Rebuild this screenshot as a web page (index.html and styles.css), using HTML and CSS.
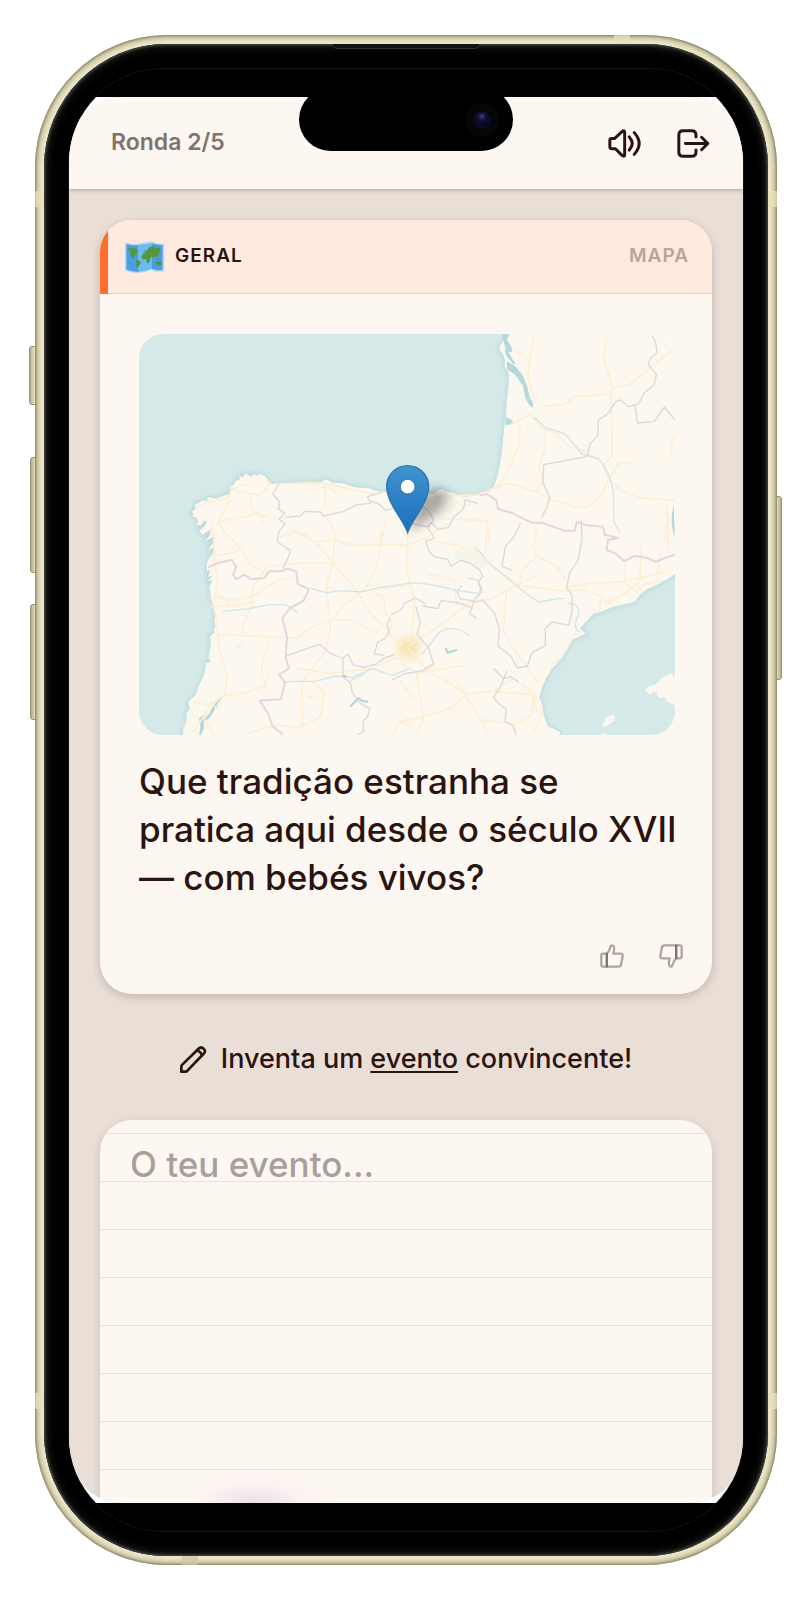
FILE: index.html
```html
<!DOCTYPE html>
<html lang="pt">
<head>
  <meta charset="UTF-8" />
  <meta name="viewport" content="width=device-width, initial-scale=1" />
  <title>Ronda 2/5</title>
  <link rel="stylesheet" href="styles.css">
</head>
<body>

  <div class="phone">
    <span class="side-btn side-btn-action"></span>
    <span class="side-btn side-btn-up"></span>
    <span class="side-btn side-btn-down"></span>
    <span class="side-btn side-btn-power"></span>
    <span class="antenna antenna-tr"></span>
    <span class="antenna antenna-bl"></span>
    <span class="antenna antenna-side antenna-lt"></span>
    <span class="antenna antenna-side antenna-rt"></span>
    <span class="antenna antenna-side antenna-lb"></span>
    <span class="antenna antenna-side antenna-rb"></span>

    <div class="bezel">
      <span class="earpiece"></span>
      <span class="island"><span class="camera"></span></span>

      <div class="screen">
        <div class="app">

          <!-- Top bar -->
          <header class="topbar">
            <span class="round">Ronda 2/5</span>
            <div class="topbar-actions">
              <button class="icon-btn" type="button" aria-label="Som">
                <svg class="icon-top" viewBox="0 0 99 88">
                  <path d="M11 29h8L42 8q8-6 8 3v66q0 9-8 3L22 60H11q-6 0-6-6V35q0-6 6-6z" />
                  <path d="M64 24q18 20 0 40M79 11q30 33 0 66" />
                </svg>
              </button>
              <button class="icon-btn" type="button" aria-label="Sair">
                <svg class="icon-top" viewBox="0 0 99 88">
                  <path d="M57 24v-6q0-13-13-13H18Q5 5 5 18v52q0 13 13 13h26q13 0 13-13v-6" />
                  <path d="M25 44h68M74 25l19 19-19 19" />
                </svg>
              </button>
            </div>
          </header>

          <main class="content">

            <!-- Question card -->
            <section class="card">
              <div class="card-head">
                <svg class="emoji" viewBox="0 0 123 99" aria-hidden="true">
                  <path class="emoji-edge" d="M3 3q20 8 39 4L82 1q20 9 39 6v85q-20 5-40-4-20 8-39 9-20-2-40-8z" />
                  <path class="emoji-sea" d="M7 8q18 6 35 4v81q-18-1-35-7zM82 6q18 7 34 6v75q-16 3-34-4z" />
                  <path class="emoji-sea-light" d="M42 12l40-6v77q-20 9-40 10z" />
                  <path class="emoji-land" d="M12 24q10-6 22-2l8 7-5 6 4 6-9 2-4 10-7-7-3-12zM36 57l10 1 6 8-8 8-2 9-5-9zM53 47l5-10 7-3 8-13 10-5 15 4 11 1v10l-6 8 2 8-8-2-9 6-6-5-4 12-3 8-6 1-3-13-10 2zM58 35l4-8 4 3zM94 63l13-3 6 8-5 7-13-6zM99 51l7 3-6 4z" />
                </svg>
                <span class="category">GERAL</span>
                <span class="kind">MAPA</span>
              </div>

              <div class="card-body">
                <!-- Map: units are thirds of a pixel -->
                <svg class="map" viewBox="0 0 1608 1203" role="img" aria-label="Mapa do norte de Espanha">
                  <defs>
                    <linearGradient id="pinFill" x1="0" y1="0" x2="0" y2="1">
                      <stop offset="0" stop-color="#3f93ce" />
                      <stop offset="1" stop-color="#1c6fbd" />
                    </linearGradient>
                    <filter id="soft" x="-50%" y="-50%" width="200%" height="200%">
                      <feGaussianBlur stdDeviation="16" />
                    </filter>
                    <filter id="coast" x="-5%" y="-5%" width="110%" height="110%">
                      <feGaussianBlur stdDeviation="6" />
                    </filter>
                    <radialGradient id="city">
                      <stop offset="0" stop-color="#fbe0a4" />
                      <stop offset="1" stop-color="#fbe0a4" stop-opacity="0" />
                    </radialGradient>
                    <clipPath id="seaClip">
                      <use href="#atlantic" />
                      <use href="#med" />
                    </clipPath>
                  </defs>

                  <rect class="land" width="1608" height="1203" />
                  <g class="sea">
                    <path id="atlantic" d="M-20-20H1108V0L1096 18 1086 30 1080 44 1092 62 1098 78 1096 96 1106 112 1111 123 1107 170 1103 208 1100 250 1095 288 1088 358 1078 418 1063 463 1048 474 1034 473 1023 483 1000 486 973 488 950 480 933 473 922 476 913 466 896 468 888 478 868 480 843 473 800 474 743 473 712 471 690 463 663 461 640 458 613 448 580 446 566 438 558 436 550 444 533 445 500 447 470 446 423 448 395 450 388 440 383 432 374 424 363 420 352 425 344 418 338 428 328 423 318 418 312 430 300 424 303 436 290 440 284 452 271 456 276 466 271 474 278 482 262 482 248 488 232 494 208 488 204 500 188 500 178 508 166 512 170 524 158 533 164 542 158 546 174 552 178 563 172 572 186 574 194 562 205 560 196 578 180 590 190 602 206 592 222 584 212 604 196 624 220 610 224 624 206 648 226 640 228 652 208 676 203 690 204 712 214 708 206 730 222 724 204 742 220 738 211 758 218 803 224 826 231 838 226 860 230 880 222 884 228 893 213 908 216 928 213 948 208 970 216 984 201 988 196 1020 178 1058 170 1082 148 1103 152 1124 142 1140 144 1170 133 1180 131 1223H-20z" />
                    <path id="med" d="M1628 708L1590 732 1553 753 1524 766 1508 778 1496 792 1488 803 1460 810 1423 818 1390 832 1363 840 1344 860 1323 883 1332 892 1342 900 1320 908 1298 918 1284 948 1263 978 1240 1004 1223 1028 1210 1060 1201 1088 1210 1112 1213 1138 1220 1160 1228 1178 1246 1184 1263 1195 1258 1223H1628z" />
                    <path d="M1088 0h24l-8 18 12 18 4 16-14 6-8-20zM1104 82l24 14 22 26 14 34 8 34 10 16v16l-12-10-12-22-6-34-22-32-26-18zM1096 44l14 14 20 32-6 2-22-26zM1100 250l20 8 2 10-22 6zM1604 514q-14 50 4 100z" class="estuary" />
                  </g>
                  <g class="coast" clip-path="url(#seaClip)" filter="url(#coast)">
                    <use href="#atlantic" />
                    <use href="#med" />
                  </g>
                  <g class="land">
                    <path d="M1518 1068l14-12 16-4 18-18 32-16 5 10 5-4v90l-22-10-10-14-16 2-8-18-12 2-6 8z" />
                    <path d="M1386 1173l10-6 4-16 22-10 6 6-2 12-20 16-12 4zM1387 1195l18 8h-14zM133 1203l4-30 15-36 12-30 18-14 16 4 14 12-8 22-12 30 4 42z" />
                  </g>
                  <path class="estuary" d="M180 1203l4-24-4-26 12-10 14 4 18-34 26-26-20 34-18 30-18 14 2 16-10 22z" />

                  <g class="park">
                    <path d="M945 645l50-8 40 20 8 40-26 10-30-22-36-8z" />
                    <path d="M880 488l30-20 30 10 16 34-20 32-40 0z" />
                    <path d="M815 900l26 30-6 50-28-14z" />
                  </g>
                  <circle cx="808" cy="942" r="52" fill="url(#city)" />

                  <!-- Roads -->
                  <g class="road">
                    <g transform="translate(-27 -42)">
                      <path d="M200 560l30-12 60-12 20-30 46-16M300 500l24 14 60 10 24-16 14-22M300 540l-36 66 16 20 14 34M264 606l56-12 70-14 30 14 18 2M360 530l6 40 34 24M250 610l-8 30 18 22M450 492l90-4 44 2 60 14 90 20M584 490l2 70M540 490l40 12 20 0 22 20M590 590l22 40 8 30M770 590l-14 70M450 650l46-14 30 6 20 18M396 600l4 10" />
                    </g>
                    <g transform="translate(783 -42)">
                      <path d="M402 48l-14 70-4 60 22 70M340 90l34 20 12 20M434 258l60-4 30-24 110-8 4-16-26-90 10-78M636 204l52-10 130-104M634 210l2 200-22 22 12 50 32-54 40 0M390 284l40 42 40 14 30 36 70 24 40 30 16 50 36 30 60 24 130 8M388 284l-56 30M360 316l-4 60-26 66-40 70M436 330l-2 60-18 50 14 40-22 36M290 496l46-4 50 16 80 34 60 20 40-2 40-36 18-44M290 500l-60 24-130 6M150 530l40 30 24-8M120 596l140 6 8 58M820 350l-10 60 16-4M800 550l4 60-10 50" />
                    </g>
                    <g transform="translate(-27 588)">
                      <path d="M278 0l50 50 30 50 40 24M250 80l70-14 10-20M250 0l4 100 10 60-14 60 10 50 8 90 22 70-4 60-24 48-20-24-20 60M250 200l60 12 60-14 70-46 60-12M240 230l80-2 56-12M410 110l-40 60-6 60-24 50-6 40M260 314l240 10 50-36 60-18 50 0 80 40 8-10M250 200l30 0 20 30M410 110l80-10 120 0-20 60 10 140-14 62-70 96 2 110-4 40M490 0l60 36 60-6 60 16 170-2M560 40l50 60 70 80 40 70 60 56M614 20l-4 80M754 0v50l-14 60-30 60-70 60-36 40M706 164l60 10 70-6M730 190l30 6 6 50 20 30-8 40M780 316l40 30M500 416l100 14 120-14 70-30 50 0M270 500l70-10 60-20 20-40M190 514l50 14 30-26M240 528l-50 80M420 326l-22 70-4 40 16 34M320 354l20-12M355 612l40-16 50-10 60 6 60-26 10-20 8-60-44-36M532 500l40 4M790 612l14-30 36-20M220 560l30 54M180 550l30 14" />
                    </g>
                    <g transform="translate(783 588)">
                      <path d="M0 50l24-6 60-24 60-40M24 0l-4 120 24 90-4 60-10 80M24 350l30-20 90-60 70-56 60-6 80-44 50-26M170 230l-8-80-80-18M110 36l70 10 60 40 120 80 130 18 60-4 50 16 20 26 66-40 24-18 18-24M260 0l-4 70M358 160l10-40 42-42-10-30 10-48M410 78l60 30 26 40M500 170l70-10 90-4 30-6 110-24M676 80v80l34 26 20-20 50-16M724 40l-4 100M780 70l-8 60M806 0l-4 70M600 246v-40M640 226l-20-20M320 170l-10 130 26 50 80 110M530 300l-20 40-26 44-26 20-14 30M20 350l60 70 20-20M0 400l50 28 150-22M50 428l20 140-20 44M84 428l50 20 60 44 40 60 30 60M0 450l44 60M0 576l60-14 100-30 40-40 80-8 120 10 14 60M280 484l60-40M404 494l-40-34M404 494l-10 60-50 30-110-16M408 500l20 50-30 60M0 570l30 20M196 490l-26-30" />
                    </g>
                  </g>

                  <!-- Rivers -->
                  <g class="river">
                    <path d="M515 762l30 10 20 4 40-6 60 4 60-14 60-8 43-6 60 8 60 14 70 10 10-16-12-24-30-6M250 832l80-8 60-12h50l40 26M430 1044l40-2 60 0 60-16 50 4 60-26 60 20 50-20M635 1040l40-20M1008 638l50 56 110 90 30 20 60-10 18 0M1288 810q34-6 30 34-20 40 6 50M850 960l50-64q46-30 90 10M1185 250l34 30 60 20 50 60 50 14 32 50 12 50 2 90 18 34" />
                    <path class="river-lake" d="M608 1026h14M920 942l6 14 28-8M634 1118l24-26 10 8 20 4" />
                  </g>

                  <!-- Region and country borders -->
                  <g class="region">
                    <path d="M420 450l-18 30 20 24-4 20 20 14-18 18 18 12-18 24-6 30 22 16 18 12-6 20-14 26 4 16M438 550l46-4 14-14 46 2 10 12 60-14 40-20 40-4-8-20 44-14M690 500l30 10 20 20 28-10" />
                    <path d="M840 508l30 24 14 26-20 20-40-8M1018 508l-40-10-4 26-30 26-16 30-30 6-20-18-12 14 20 30-26 10 10 30 16 16 40 8 10 20 30-18 28 10 30 22 6 18-12 16 10 30-20 20-16 46 20 12M1145 568l-20 40-26 30-10 60 30 10M1327 558l2 60-12 60-26 40-8 44 16 20 0 50-10 42-50-10-20 20 0 50-40 22-14 40-30 6-20-36-38-30 4-50-14-48-36-40-16 6-52-10-8-20 12-20M996 820l-40-14-50-6-10 24-46-8M860 810l-30-18-34 16-10 20-30 14M830 816l14 50-10 34 34 40 16 50-34 20-56 10-34 18M756 850l-12 20 6 24-12 20-22 10-10 36 30 4M440 966l40-14 40-14 24-6 30 26 34 14 20-10 14 30 30 8 40-10 24-18 30-10M612 970v60l22 16 6 30 22 30 30 18-6 24-14 14 2 30-24 14M1064 1004l30 30 20-6 26 16M1104 1010l-20 50-20 30 16 20 22 16-4 36 24 14 10 28M1208 550l16-30 8-30-20-44 2-54 130-24 10-40 22-24 2-46 30-20 22-36 16-4 22 20 30-8 18-34 30-24 6-30-24-30 6-20 20-16-4-30-10-20M1488 213l8 54 50-4 30-44 34 42 16-34" />
                  </g>
                  <g class="border">
                    <path d="M1023 484l20-4 30 20 4 26 40 10 60 30 30 0 70 24 30 0 6-26 30 10 50 4 4 24 40 10-30 6-4 30 26 10 26 24 30-16 40 6 26 12 30-14 30-8" />
                    <path d="M208 700l30-14 40-8 14 20-10 24 10 14 24-14 20 14 40-4 14-20 36 0 20-8 26 8 4 38 34 16-16 34-40 22-24 30 14 56-4 60 10 36-30 18 18 24-12 50-64 4 26 40 12 36 30 24-26 44" />
                  </g>

                  <!-- Marker -->
                  <path class="pin-shadow" filter="url(#soft)" d="M808 596l26-100q40-44 84-24 24 28-30 70z" />
                  <path class="pin" d="M806 596C793 556 743 508 743 456a63 61 0 0 1 126 0C869 508 819 556 806 596z" />
                  <circle class="pin-hole" cx="806" cy="458" r="22" />
                </svg>

                <p class="question">Que tradição estranha se pratica aqui desde o século XVII — com bebés vivos?</p>
              </div>

              <div class="votes">
                <button class="vote-btn" type="button" aria-label="Gosto">
                  <svg class="icon-vote" viewBox="0 0 74 74">
                    <path d="M21 70H10q-6 0-6-6V36q0-6 6-6h11z" />
                    <path d="M21 30q7-6 11-20 3-8 8-5 7 3 1 25h22q8 0 7 7l-5 26q-1 7-8 7H21z" />
                  </svg>
                </button>
                <button class="vote-btn" type="button" aria-label="Não gosto">
                  <svg class="icon-vote" viewBox="0 0 74 74">
                    <path d="M53 4h11q6 0 6 6v28q0 6-6 6H53z" />
                    <path d="M53 44q-7 6-11 20-3 8-8 5-7-3-1-25H11q-8 0-7-7l5-26q1-7 8-7h36z" />
                  </svg>
                </button>
              </div>
            </section>

            <!-- Answer -->
            <label class="hint" for="answer">
              <svg class="icon-pencil" viewBox="0 0 80 80">
                <path d="M4 76V61q0-3 2-5L55 8q7-7 15 0 8 7 0 15L22 73q-2 3-6 3z" />
                <path d="M50 14q11 1 15 14" />
              </svg>
              <span>Inventa um <u>evento</u> convincente!</span>
            </label>
            <textarea id="answer" class="answer" placeholder="O teu evento..."></textarea>

          </main>
        </div>
      </div>
    </div>
  </div>

</body>
</html>
```

FILE: styles.css
```css
* {
  box-sizing: border-box;
}
body {
  margin: 0;
  background-color: #fff;
  color: #2b1310;
  font-family: Inter, "Liberation Sans", sans-serif;
}
button {
  padding: 0;
  border: none;
  background: none;
  color: inherit;
  cursor: pointer;
}
svg {
  display: block;
}

/* Phone frame */
.phone {
  position: relative;
  display: flex;
  height: calc(100vh - 70px);
  min-height: 1400px;
  margin: 35px;
  padding: 9px;
  border-radius: 132px;
  background-color: #ece6c8;
  box-shadow: inset 0 0 2px 1px #8a8568, inset 0 0 5px 3px #b3ac8a;
}
.bezel {
  position: relative;
  display: flex;
  flex: 1;
  min-width: 0;
  padding: 25px;
  border-radius: 123px;
  background-color: #000;
  box-shadow: inset 0 0 3px 1px #50504c, inset 0 0 10px 2px #242422;
}
.screen {
  display: flex;
  flex: 1;
  min-width: 0;
  padding: 28px 0;
  border-radius: 94px;
  overflow: hidden;
  background: linear-gradient(#000 28px, #fff 28px, #fff calc(100% - 28px), #000 calc(100% - 28px));
  box-shadow: 0 0 0 1px #121212;
}
.app {
  display: flex;
  flex: 1;
  flex-direction: column;
  min-width: 0;
  border-radius: 54px;
  overflow: hidden;
  background-color: #e9dfd7;
}
.side-btn {
  position: absolute;
  left: -5px;
  z-index: -1;
  width: 12px;
  height: 116px;
  border: 1px solid #97916f;
  border-radius: 3px;
  background: linear-gradient(90deg, #b5ae8c, #ece7cb 50%, #b5ae8c);
}
.side-btn-action {
  top: 311px;
  left: -6px;
  height: 59px;
}
.side-btn-up {
  top: 422px;
}
.side-btn-down {
  top: 569px;
}
.side-btn-power {
  top: 461px;
  right: -5px;
  left: auto;
  height: 184px;
}
.antenna {
  position: absolute;
  width: 16px;
  height: 9px;
  background-color: #e8e1b9;
  opacity: 0.7;
}
.antenna-tr {
  top: 0;
  right: 147px;
}
.antenna-bl {
  bottom: 0;
  left: 147px;
  background-color: #cfc8a0;
}
.antenna-side {
  width: 9px;
  height: 16px;
}
.antenna-lt,
.antenna-rt {
  top: 156px;
}
.antenna-lb,
.antenna-rb {
  bottom: 156px;
}
.antenna-lt,
.antenna-lb {
  left: 0;
}
.antenna-rt,
.antenna-rb {
  right: 0;
}
.earpiece {
  position: absolute;
  top: 0;
  left: 50%;
  width: 148px;
  height: 5px;
  margin-left: -74px;
  border: 1px solid #30302e;
  border-top: none;
  border-radius: 0 0 5px 5px;
  background-color: #111;
}
.island {
  position: absolute;
  top: 44px;
  left: 50%;
  z-index: 2;
  display: flex;
  align-items: center;
  justify-content: flex-end;
  width: 214px;
  height: 63px;
  margin-left: -107px;
  padding-right: 22px;
  border-radius: 32px;
  background-color: #000;
}
.camera {
  width: 18px;
  height: 18px;
  border-radius: 50%;
  background: radial-gradient(circle at 50% 30%, #45438c 0, #12102f 25%, #080822 55%, #110e30 100%);
  box-shadow: 0 0 0 8px #060606;
}

/* Top bar */
.topbar {
  display: flex;
  z-index: 1;
  align-items: center;
  justify-content: space-between;
  height: 92px;
  padding: 0 33px 0 42px;
  background-color: #fdf7f1;
  box-shadow: 0 1px 4px rgba(43, 19, 16, 0.3);
}
.round {
  padding-bottom: 2px;
  color: #7f7370;
  font-size: 23px;
  font-weight: 600;
  line-height: 32px;
}
.topbar-actions {
  display: flex;
  gap: 36px;
}
.icon-top,
.icon-vote,
.icon-pencil {
  fill: none;
  stroke: #2b1310;
  stroke-width: 8;
  stroke-linecap: round;
  stroke-linejoin: round;
}
.icon-top {
  width: 33px;
  height: 29px;
  stroke-width: 9;
}

/* Card */
.content {
  display: flex;
  flex: 1;
  flex-direction: column;
  min-height: 0;
  padding: 31px 31px 0;
}
.card {
  border-radius: 32px;
  overflow: hidden;
  flex-shrink: 0;
  background-color: #fdf7f1;
  box-shadow: 0 3px 10px rgba(43, 19, 16, 0.2);
}
.card-head {
  display: flex;
  align-items: center;
  height: 74px;
  padding: 0 23px 3px 16px;
  border-left: 8px solid #fb702f;
  background-color: #ffeae0;
  box-shadow: inset 0 -1px #ffc6ae;
  font-size: 19px;
  font-weight: 600;
  letter-spacing: 1px;
  line-height: 24px;
}
.emoji {
  width: 41px;
  height: 33px;
  margin: 4px 10px 0 0;
}
.emoji-edge {
  fill: #bfdcf0;
}
.emoji-sea {
  fill: #4a9fe3;
}
.emoji-sea-light {
  fill: #6bbcf2;
}
.emoji-land {
  fill: #55963f;
}
.kind {
  margin-left: auto;
  color: #b9a49c;
}
.card-body {
  padding: 40px 37px 0 39px;
}

/* Map */
.map {
  width: 100%;
  border-radius: 24px;
}
.land {
  fill: #fcf8f0;
}
.sea {
  fill: #d5e9e9;
}
.estuary {
  fill: #b5d8dc;
}
.coast {
  fill: none;
  stroke: #b4d5d8;
  stroke-width: 8;
}
.park {
  fill: #f5f5ea;
}
.road,
.river,
.region,
.border {
  fill: none;
  stroke-linejoin: round;
}
.road {
  stroke: #fdeed4;
  stroke-width: 5;
}
.river {
  stroke: #d2e6e8;
  stroke-width: 4;
}
.river-lake {
  stroke: #aed5d9;
  stroke-width: 6;
}
.region {
  stroke: #dcd8da;
  stroke-width: 4;
}
.border {
  stroke: #e6d5dc;
  stroke-width: 6;
}
.pin-shadow {
  fill: #000;
  opacity: 0.32;
}
.pin {
  fill: url(#pinFill);
  stroke: #2c75ad;
  stroke-width: 4;
}
.pin-hole {
  fill: #fff;
  stroke: #2c75ad;
  stroke-width: 3;
}
.question {
  margin: 22px -4px 0 0;
  font-size: 35px;
  font-weight: 500;
  line-height: 48px;
}
.votes {
  display: flex;
  justify-content: flex-end;
  gap: 35px;
  padding: 43px 29px 26px;
}
.icon-vote {
  width: 24px;
  height: 24px;
  stroke: rgba(43, 29, 26, 0.38);
  stroke-width: 7;
}

/* Answer */
.hint {
  display: flex;
  align-items: center;
  justify-content: center;
  flex-shrink: 0;
  gap: 14px;
  padding: 49px 0 45px;
  font-size: 27px;
  font-weight: 500;
  line-height: 32px;
}
.hint u {
  text-decoration-thickness: 2px;
  text-underline-offset: 3px;
}
.icon-pencil {
  width: 27px;
  height: 27px;
}
.answer {
  display: block;
  flex: 1;
  width: 100%;
  min-height: 0;
  padding: 20px 30px 0;
  border: none;
  border-radius: 32px 32px 0 0;
  outline: none;
  resize: none;
  background-color: #fdf7f1;
  background-image:
    radial-gradient(ellipse 50px 20px at 152px 100%, #e9e3ea, transparent),
    radial-gradient(ellipse 80px 34px at 160px 100%, #faeff0, transparent),
    linear-gradient(#e7e1dc 1px, transparent 1px);
  background-position: 0 0, 0 0, 0 13px;
  background-size: 100% 100%, 100% 100%, 100% 48px;
  box-shadow: 0 3px 10px rgba(43, 19, 16, 0.15);
  color: #2b1310;
  font-family: inherit;
  font-size: 35px;
  font-weight: 500;
  line-height: 48px;
}
.answer::placeholder {
  color: #a89f9c;
  opacity: 1;
}
```
